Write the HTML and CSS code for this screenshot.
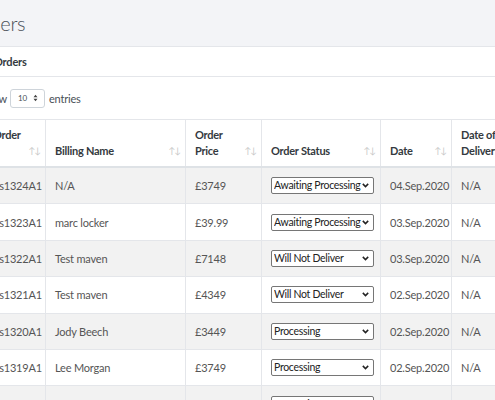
FILE: index.html
```html
<!DOCTYPE html>
<html>
<head>
<meta charset="utf-8">
<link rel="stylesheet" href="styles.css">
</head>
<body>
<div class="title-bar"><h1 class="title">Orders</h1></div>
<div class="card">
  <div class="card-header">Orders</div>
  <div class="length">
    <span>Show</span>
    <span class="len-box"><span>10</span><svg width="5" height="8" viewBox="0 0 5 8"><path d="M0.5 3.2 L2.5 0.8 L4.5 3.2 Z M0.5 4.8 L2.5 7.2 L4.5 4.8 Z" fill="#444"/></svg></span>
    <span>entries</span>
  </div>
  <table class="orders">
    <colgroup><col class="c1"><col class="c2"><col class="c3"><col class="c4"><col class="c5"><col class="c6"></colgroup>
    <thead>
      <tr>
        <th><div class="th-inner"><span>Order<br>&nbsp;</span><span class="sort">↑↓</span></div></th>
        <th><div class="th-inner"><span>Billing Name</span><span class="sort">↑↓</span></div></th>
        <th><div class="th-inner"><span>Order<br>Price</span><span class="sort">↑↓</span></div></th>
        <th><div class="th-inner"><span>Order Status</span><span class="sort">↑↓</span></div></th>
        <th><div class="th-inner"><span>Date</span><span class="sort">↑↓</span></div></th>
        <th><div class="th-inner"><span>Date of<br>Delivery</span><span class="sort">↑↓</span></div></th>
      </tr>
    </thead>
    <tbody>
      <tr><td>#s1324A1</td><td>N/A</td><td>£3749</td><td><span class="sel"><select class="status"><option>Awaiting Processing</option></select><svg class="chev" width="7" height="5" viewBox="0 0 7 5"><path d="M0.8 0.9 L3.5 3.6 L6.2 0.9" fill="none" stroke="#222" stroke-width="1.5"/></svg></span></td><td>04.Sep.2020</td><td>N/A</td></tr>
      <tr><td>#s1323A1</td><td>marc locker</td><td>£39.99</td><td><span class="sel"><select class="status"><option>Awaiting Processing</option></select><svg class="chev" width="7" height="5" viewBox="0 0 7 5"><path d="M0.8 0.9 L3.5 3.6 L6.2 0.9" fill="none" stroke="#222" stroke-width="1.5"/></svg></span></td><td>03.Sep.2020</td><td>N/A</td></tr>
      <tr><td>#s1322A1</td><td>Test maven</td><td>£7148</td><td><span class="sel"><select class="status"><option>Will Not Deliver</option></select><svg class="chev" width="7" height="5" viewBox="0 0 7 5"><path d="M0.8 0.9 L3.5 3.6 L6.2 0.9" fill="none" stroke="#222" stroke-width="1.5"/></svg></span></td><td>03.Sep.2020</td><td>N/A</td></tr>
      <tr><td>#s1321A1</td><td>Test maven</td><td>£4349</td><td><span class="sel"><select class="status"><option>Will Not Deliver</option></select><svg class="chev" width="7" height="5" viewBox="0 0 7 5"><path d="M0.8 0.9 L3.5 3.6 L6.2 0.9" fill="none" stroke="#222" stroke-width="1.5"/></svg></span></td><td>02.Sep.2020</td><td>N/A</td></tr>
      <tr><td>#s1320A1</td><td>Jody Beech</td><td>£3449</td><td><span class="sel"><select class="status"><option>Processing</option></select><svg class="chev" width="7" height="5" viewBox="0 0 7 5"><path d="M0.8 0.9 L3.5 3.6 L6.2 0.9" fill="none" stroke="#222" stroke-width="1.5"/></svg></span></td><td>02.Sep.2020</td><td>N/A</td></tr>
      <tr><td>#s1319A1</td><td>Lee Morgan</td><td>£3749</td><td><span class="sel"><select class="status"><option>Processing</option></select><svg class="chev" width="7" height="5" viewBox="0 0 7 5"><path d="M0.8 0.9 L3.5 3.6 L6.2 0.9" fill="none" stroke="#222" stroke-width="1.5"/></svg></span></td><td>02.Sep.2020</td><td>N/A</td></tr>
      <tr><td>#s1318A1</td><td>Jonathan Hubbard</td><td>£2149</td><td><span class="sel"><select class="status"><option>Processing</option></select><svg class="chev" width="7" height="5" viewBox="0 0 7 5"><path d="M0.8 0.9 L3.5 3.6 L6.2 0.9" fill="none" stroke="#222" stroke-width="1.5"/></svg></span></td><td>01.Sep.2020</td><td>N/A</td></tr>
    </tbody>
  </table>
</div>
</body>
</html>
```
FILE: styles.css
```css
html, body {
  margin: 0;
  padding: 0;
}
body {
  font-family: Lato, "Open Sans", sans-serif;
  color: #495057;
  width: 495px;
  height: 400px;
  overflow: hidden;
  background: #fff;
}
.title-bar {
  height: 46px;
  background: #f3f4f7;
  border-bottom: 1px solid #e4e6ea;
  display: flex;
  align-items: center;
}
.title {
  margin: 0 0 0 -32px;
  font-size: 20px;
  font-weight: 300;
  color: #495057;
  line-height: 24px;
  letter-spacing: -0.3px;
}
.card-header {
  height: 29px;
  border-bottom: 1px solid #e4e6ea;
  display: flex;
  align-items: center;
  margin-left: -6px;
  font-weight: 700;
  font-size: 11px;
  letter-spacing: -0.2px;
  color: #343a40;
}
.length {
  height: 42px;
  display: flex;
  align-items: center;
  margin-left: -19px;
  font-size: 11px;
  letter-spacing: -0.2px;
  color: #495057;
}
.len-box {
  width: 35px;
  height: 19px;
  margin: 0 4px 0 3px;
  border: 1px solid #ced4da;
  border-radius: 3px;
  box-sizing: border-box;
  display: flex;
  align-items: center;
  justify-content: space-between;
  padding: 0 6px 0 7px;
  font-size: 8px;
}
.orders {
  margin-left: -17px;
  border-collapse: collapse;
  table-layout: fixed;
  width: 568px;
}
.c1 { width: 62px; }
.c2 { width: 140px; }
.c3 { width: 76px; }
.c4 { width: 119px; }
.c5 { width: 71px; }
.c6 { width: 100px; }
.orders th {
  font-weight: 700;
  font-size: 11px;
  letter-spacing: -0.25px;
  color: #343a40;
  text-align: left;
  vertical-align: bottom;
  padding: 7px 5px 7px 9px;
  line-height: 16px;
  border: 1px solid #e4e6ea;
  border-bottom: 2px solid #dee2e6;
}
.th-inner {
  display: flex;
  justify-content: space-between;
  align-items: flex-end;
}
.sort {
  font-size: 9px;
  color: #c8c8c8;
  letter-spacing: -1px;
  line-height: 16px;
  font-weight: 400;
}
.orders td {
  padding: 0 9px;
  height: 35.4px;
  font-size: 11px;
  letter-spacing: -0.2px;
  color: #555;
  border: 1px solid #e4e6ea;
  white-space: nowrap;
  overflow: hidden;
  vertical-align: middle;
}
.orders tbody tr:nth-child(odd) td {
  background: #f2f2f2;
}
.sel {
  position: relative;
  display: block;
  width: 103px;
}
.status {
  -webkit-appearance: none;
  appearance: none;
  width: 103px;
  height: 17px;
  font-size: 10.5px;
  letter-spacing: -0.3px;
  font-family: inherit;
  border: 1px solid #767676;
  border-radius: 2px;
  padding: 0 10px 0 2px;
  background: #fff;
  color: #222;
  display: block;
  line-height: 15px;
}
.chev {
  position: absolute;
  right: 5px;
  top: 6px;
  pointer-events: none;
}
```
